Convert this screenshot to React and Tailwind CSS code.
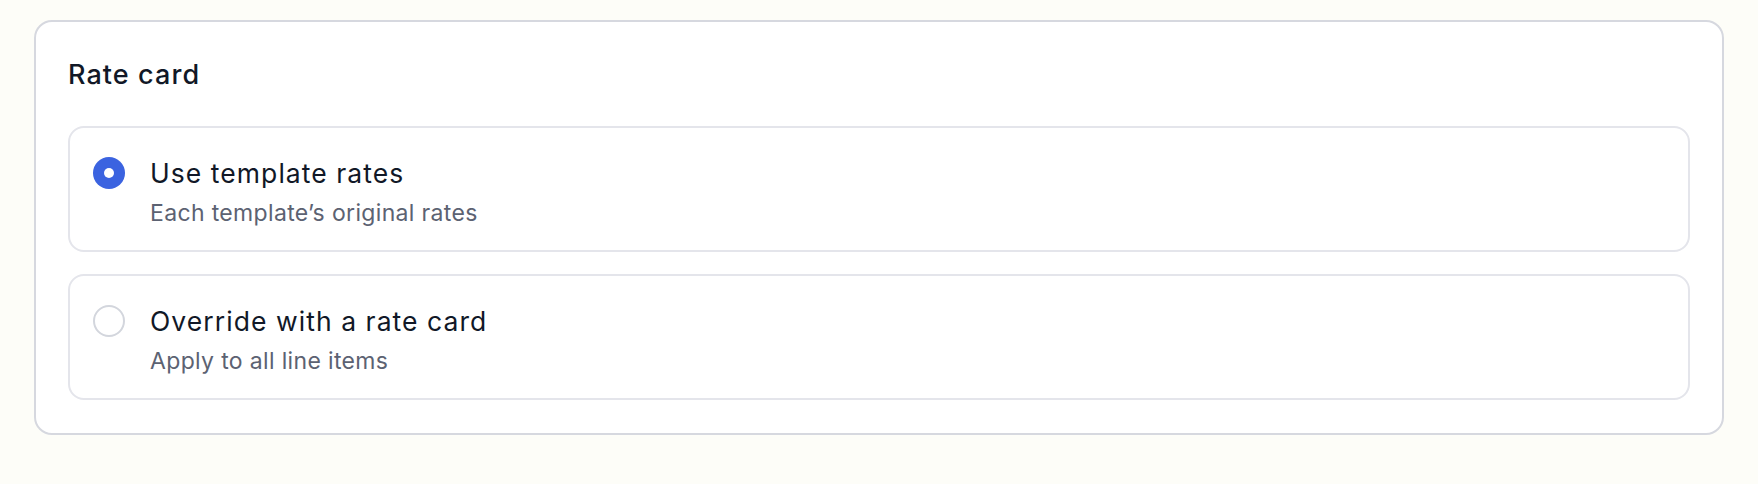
import React, { useState } from "react";

const options = [
  { id: "template", label: "Use template rates", sub: "Each template\u2019s original rates" },
  { id: "override", label: "Override with a rate card", sub: "Apply to all line items" },
];

function Radio({ checked }) {
  return checked ? (
    <span className="flex h-[32px] w-[32px] shrink-0 items-center justify-center rounded-full bg-[#3b63e0]">
      <span className="block h-[10px] w-[10px] rounded-full bg-white" />
    </span>
  ) : (
    <span className="block h-[32px] w-[32px] shrink-0 rounded-full border-2 border-[#d3d6dd] bg-white" />
  );
}

export default function App() {
  const [selected, setSelected] = useState("template");

  return (
    <div className="min-h-screen w-full bg-[#fdfdf8] px-[34px] pt-[20px] font-['Inter',sans-serif] antialiased">
      <div className="rounded-[18px] border-2 border-[#d6d8df] bg-white px-[32px] pb-[33px] pt-[32px]">
        <h2 className="mb-[30px] text-[27px] font-medium leading-[42px] tracking-[0.04em] text-[#111827]">Rate card</h2>

        <div className="flex flex-col gap-[22px]">
          {options.map((opt) => (
            <button
              key={opt.id}
              onClick={() => setSelected(opt.id)}
              className="flex h-[126px] w-full items-start gap-[25px] rounded-[16px] border-2 border-[#e4e5eb] bg-white px-[23px] pt-[25px] text-left"
            >
              <span className="mt-[4px] block">
                <Radio checked={selected === opt.id} />
              </span>
              <span className="flex flex-col gap-[2px]">
                <span className="text-[26.5px] leading-[40px] tracking-[0.04em] text-[#111827]">{opt.label}</span>
                <span className="text-[23px] leading-[36px] tracking-[0.015em] text-[#5c6272]">{opt.sub}</span>
              </span>
            </button>
          ))}
        </div>
      </div>
    </div>
  );
}
